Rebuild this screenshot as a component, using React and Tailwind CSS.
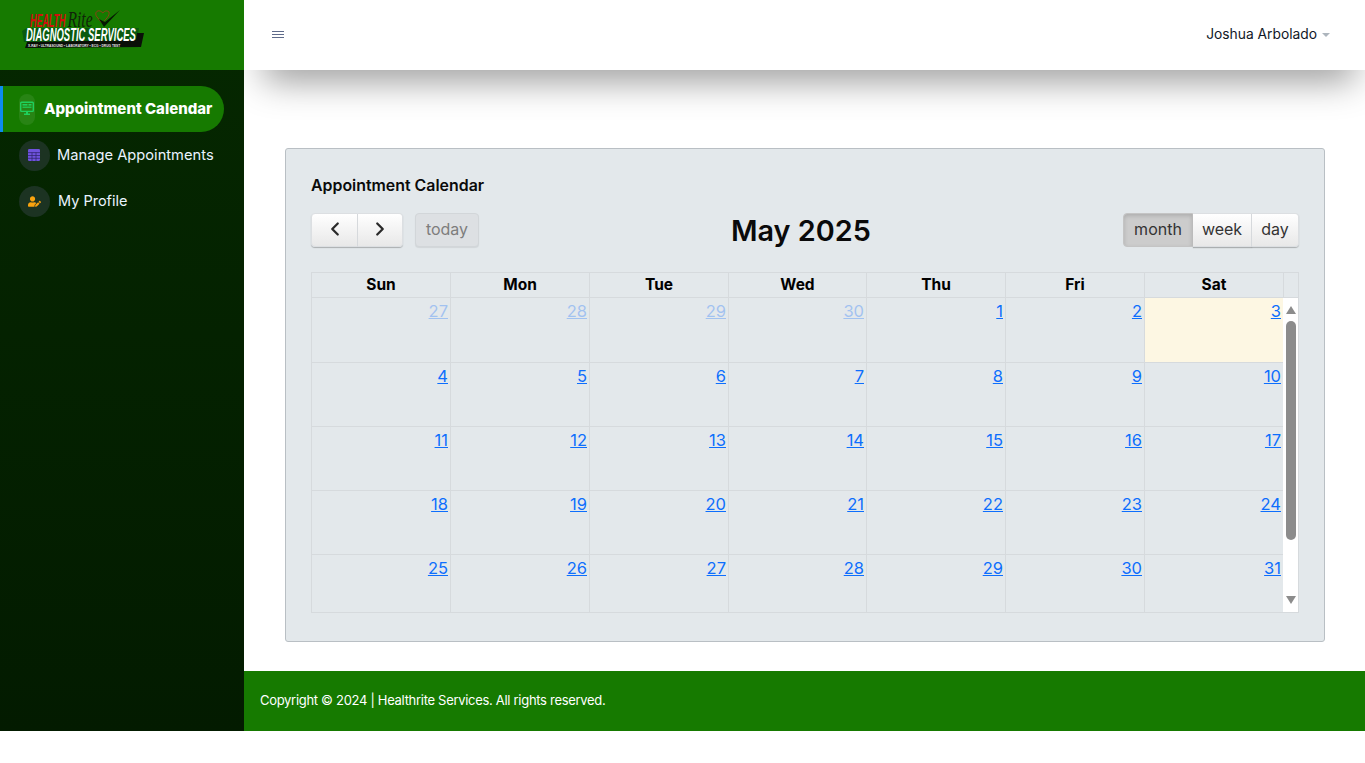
import { FaUserEdit } from 'react-icons/fa';
import { ChevronLeft, ChevronRight } from 'lucide-react';

const colWidths = 'grid-cols-[138px_139px_139px_138px_139px_139px_139px]';
const dayNames = ['Sun', 'Mon', 'Tue', 'Wed', 'Thu', 'Fri', 'Sat'];
const weeks = [
  [27, 28, 29, 30, 1, 2, 3],
  [4, 5, 6, 7, 8, 9, 10],
  [11, 12, 13, 14, 15, 16, 17],
  [18, 19, 20, 21, 22, 23, 24],
  [25, 26, 27, 28, 29, 30, 31],
];

function Logo() {
  return (
    <svg width="128" height="46" viewBox="0 0 128 46" className="block">
      <text transform="translate(11 20) scale(0.47 1)" fontFamily="Liberation Sans" fontWeight="700" fontStyle="italic" fontSize="19" fill="#d40d0d">HEALTH</text>
      <text transform="translate(48.5 20) scale(0.65 1)" fontFamily="Liberation Serif" fontStyle="italic" fontSize="24" fill="#10240a">Rite</text>
      <path d="M78 10c-3-4 0-7 3-6 2 0 2 2 3 2 1-2 4-3 6-1 1 4-4 8-7 11z" fill="none" stroke="#a8321c" strokeWidth="0.8" />
      <path d="M80 12l5 8L101 3l-15 12z" fill="#061a02" />
      <path d="M3 24L8 21L120 21L118 33L5 35z" fill="#0a5a10" />
      <path d="M118 26L125 26L122 40L6 41L8 35L117 33z" fill="#0a0f08" />
      <text transform="translate(7 34) scale(0.526 1)" fontFamily="Liberation Sans" fontWeight="700" fontStyle="italic" fontSize="18" fill="#ffffff">DIAGNOSTIC SERVICES</text>
      <text transform="translate(9 40) scale(0.74 1)" fontFamily="Liberation Sans" fontWeight="700" fontSize="4.4" fill="#e8e8e8">X-RAY • ULTRASOUND • LABORATORY • ECG • DRUG TEST</text>
    </svg>
  );
}

function MonitorIcon() {
  return (
    <svg width="14" height="16" viewBox="0 0 14 16">
      <rect x="0.7" y="1.2" width="12.6" height="9.2" rx="0.8" fill="none" stroke="#1fd15d" strokeWidth="1.4" />
      <rect x="2.5" y="3" width="5" height="1.6" fill="#1fd15d" />
      <rect x="2.5" y="5.6" width="9" height="1.2" fill="#1fd15d" />
      <rect x="8.5" y="3" width="3" height="1.6" fill="#1fd15d" />
      <path d="M6 10.5h2v2h2v1.5H4v-1.5h2z" fill="#1fd15d" />
    </svg>
  );
}

function TableIcon() {
  return (
    <svg width="12" height="12" viewBox="0 0 12 12" className="mr-[1px]">
      <rect width="12" height="12" rx="1.2" fill="#6f52dd" />
      <path d="M0 3.6h12M0 6.5h12M0 9.3h12M4 3.6V12M8 3.6V12" stroke="#2b2266" strokeWidth="0.7" />
    </svg>
  );
}

function Sidebar() {
  return (
    <aside className="relative z-10 w-[244px] shrink-0 flex flex-col bg-gradient-to-b from-[#052800] to-[#031b00]">
      <div className="h-[70px] bg-[#167a00] pl-[19px] pt-[7px]">
        <Logo />
      </div>
      <nav className="pt-[16px] w-[224px] text-[14.5px] text-[#eaf3ff]">
        <div className="h-[46px] flex items-center bg-[#167a00] rounded-r-full border-l-[3px] border-[#0d8bf0] pl-[16px]">
          <span className="w-[16px] h-[31px] rounded-full bg-[#ffffff14] flex items-center justify-center">
            <MonitorIcon />
          </span>
          <span className="ml-[9px] mt-[1px] text-[15px] font-extrabold text-white whitespace-nowrap">Appointment Calendar</span>
        </div>
        <div className="h-[46px] flex items-center pl-[19px]">
          <span className="w-[31px] h-[31px] rounded-full bg-[#1c3322] flex items-center justify-center">
            <TableIcon />
          </span>
          <span className="ml-[7px] text-[14.7px] whitespace-nowrap">Manage Appointments</span>
        </div>
        <div className="h-[46px] flex items-center pl-[19px]">
          <span className="w-[31px] h-[31px] rounded-full bg-[#1c3322] flex items-center justify-center">
            <FaUserEdit className="text-[13px] text-[#f9a30f]" />
          </span>
          <span className="ml-[8px] whitespace-nowrap">My Profile</span>
        </div>
      </nav>
    </aside>
  );
}

function Header() {
  return (
    <header className="relative h-[70px] shrink-0 bg-white flex items-center justify-between pl-[28px] pr-[35px] pb-[2px] shadow-[5px_25px_36px_-15px_rgba(0,0,0,0.42)]">
      <div className="flex flex-col gap-[2px] w-[12px]">
        <span className="h-[1px] bg-[#5f6b8a]" />
        <span className="h-[1px] bg-[#5f6b8a]" />
        <span className="h-[1px] bg-[#5f6b8a]" />
      </div>
      <div className="flex items-center text-[13.8px] text-[#111827]">
        <span>Joshua Arbolado</span>
        <span className="ml-[5px] mt-[2px] border-x-[4px] border-x-transparent border-t-[4px] border-t-[#adb5bd]" />
      </div>
    </header>
  );
}

function Toolbar() {
  const btn = 'h-[34px] pb-[2px] flex items-center justify-center bg-gradient-to-b from-white to-[#e8e8e8] shadow-[0_1px_1px_rgba(0,0,0,0.25)] border border-[#dcdfe2]';
  return (
    <div className="relative h-[34px] flex items-center justify-between mt-[16px]">
      <div className="flex">
        <button className={`${btn} w-[47px] rounded-l-[4px]`}><ChevronLeft size={22} strokeWidth={2.5} className="text-[#2a2a2a]" /></button>
        <button className={`${btn} w-[45px] rounded-r-[4px] border-l-0`}><ChevronRight size={22} strokeWidth={2.5} className="text-[#2a2a2a]" /></button>
        <button className="ml-[12px] w-[64px] h-[34px] pb-[2px] rounded-[4px] bg-[#dde0e3] border border-[#d2d6d9] text-[16px] text-[#7d7d7d] shadow-[0_1px_1px_rgba(0,0,0,0.08)]">today</button>
      </div>
      <h2 className="absolute left-[420px] top-[0px] text-[28.8px] leading-[36px] font-semibold text-[#0a0a0a] whitespace-nowrap">May 2025</h2>
      <div className="flex text-[16px] text-[#333333]">
        <button className="w-[70px] h-[34px] pb-[2px] rounded-l-[4px] bg-[#cccccc] shadow-[inset_0_2px_4px_rgba(0,0,0,0.15)] border border-[#c4c4c4]">month</button>
        <button className={`${btn} w-[59px] border-l-0`}>week</button>
        <button className={`${btn} w-[47px] rounded-r-[4px] border-l-0`}>day</button>
      </div>
    </div>
  );
}

function Scrollbar() {
  return (
    <div className="w-[15px] bg-white flex flex-col items-center pt-[8px]">
      <span className="border-x-[5px] border-x-transparent border-b-[8px] border-b-[#8c8c8c]" />
      <span className="w-[10px] h-[219px] rounded-full bg-[#8c8c8c] mt-[7px]" />
      <span className="border-x-[5px] border-x-transparent border-t-[8px] border-t-[#8c8c8c] mt-[56px]" />
    </div>
  );
}

function Calendar() {
  return (
    <div className="mt-[25px] border border-[#d6dadd] w-[988px]">
      <div className="flex h-[25px] border-b border-[#d6dadd]">
        <div className={`grid ${colWidths} w-[971px] shrink-0`}>
          {dayNames.map((d, i) => (
            <div key={d} className={`text-center text-[15.5px] leading-[23px] font-bold text-black ${i > 0 ? 'border-l border-[#d6dadd]' : ''}`}>{d}</div>
          ))}
        </div>
        <div className="flex-1 border-l border-[#d6dadd]" />
      </div>
      <div className="flex h-[314px]">
        <div className="w-[971px] shrink-0 overflow-hidden">
          {weeks.map((week, w) => (
            <div key={w} className={`grid ${colWidths} ${w === 0 ? 'h-[65px]' : 'h-[64px]'} border-b border-[#d6dadd]`}>
              {week.map((n, i) => (
                <div key={i} className={`text-right pr-[2px] pt-[1px] ${i > 0 ? 'border-l border-[#d6dadd]' : ''} ${w === 0 && n === 3 ? 'bg-[#fdf7e3]' : ''}`}>
                  <a className={`text-[16.5px] leading-[22px] underline text-[#0d6efd] ${w === 0 && i < 4 ? 'opacity-30' : ''}`}>{n}</a>
                </div>
              ))}
            </div>
          ))}
        </div>
        <Scrollbar />
      </div>
    </div>
  );
}

export default function App() {
  return (
    <div className="flex h-[731px] bg-white overflow-hidden" style={{ fontFamily: 'Inter, "Liberation Sans", sans-serif' }}>
      <Sidebar />
      <main className="flex-1 flex flex-col min-w-0">
        <Header />
        <div className="flex-1 pt-[78px] pl-[41px] pr-[40px]">
          <section className="h-[494px] bg-[#e3e8eb] border border-[#b9bfc4] rounded-[3px] px-[25px] pt-[26px]">
            <h3 className="text-[15.9px] leading-[22px] font-semibold text-[#0a0a0a]">Appointment Calendar</h3>
            <Toolbar />
            <Calendar />
          </section>
        </div>
        <footer className="h-[60px] shrink-0 bg-[#167a00] flex items-center pl-[16px] text-[13px] tracking-[-0.3px] text-white">
          Copyright © 2024 | Healthrite Services. All rights reserved.
        </footer>
      </main>
    </div>
  );
}
